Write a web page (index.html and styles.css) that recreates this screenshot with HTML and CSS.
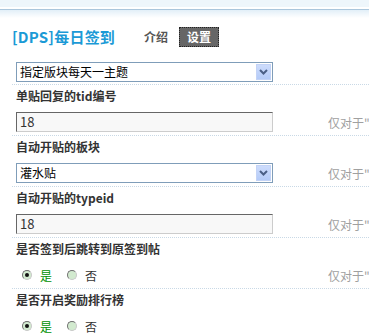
FILE: index.html
```html
<!DOCTYPE html>
<html>
<head>
<meta charset="utf-8">
<link rel="stylesheet" href="styles.css">
</head>
<body>
<div class="page">
  <div class="topbar"></div>
  <div class="topgap"></div>
  <div class="topline"></div>
  <div class="head">
    <h1 class="title">[DPS]每日签到</h1>
    <div class="tabs">
      <span class="tab">介绍</span>
      <span class="tab active">设置</span>
    </div>
  </div>
  <div class="form">
    <div class="row first">
      <div class="field">
        <div class="select"><span class="sel-text">指定版块每天一主题</span><span class="sel-btn"><svg width="9" height="6" viewBox="0 0 9 6"><path d="M1 1 L4.5 4.5 L8 1" fill="none" stroke="#4a5f86" stroke-width="2"/></svg></span></div>
      </div>
    </div>
    <div class="row">
      <div class="label">单贴回复的tid编号</div>
      <div class="field">
        <div class="input">18</div>
        <span class="tip">仅对于"每日签到"有效</span>
      </div>
    </div>
    <div class="row">
      <div class="label">自动开贴的板块</div>
      <div class="field">
        <div class="select"><span class="sel-text">灌水贴</span><span class="sel-btn"><svg width="9" height="6" viewBox="0 0 9 6"><path d="M1 1 L4.5 4.5 L8 1" fill="none" stroke="#4a5f86" stroke-width="2"/></svg></span></div>
        <span class="tip">仅对于"每日签到"有效</span>
      </div>
    </div>
    <div class="row">
      <div class="label">自动开贴的typeid</div>
      <div class="field">
        <div class="input">18</div>
        <span class="tip">仅对于"每日签到"有效</span>
      </div>
    </div>
    <div class="row">
      <div class="label">是否签到后跳转到原签到帖</div>
      <div class="field">
        <div class="radios">
          <span class="radio checked"></span><span class="opt yes">是</span>
          <span class="radio"></span><span class="opt">否</span>
        </div>
        <span class="tip">仅对于"每日签到"有效</span>
      </div>
    </div>
    <div class="row">
      <div class="label">是否开启奖励排行榜</div>
      <div class="field">
        <div class="radios">
          <span class="radio checked"></span><span class="opt yes">是</span>
          <span class="radio"></span><span class="opt">否</span>
        </div>
      </div>
    </div>
  </div>
</div>
</body>
</html>
```
FILE: styles.css
```css
html, body {
  margin: 0;
  padding: 0;
  background: #fff;
}
body {
  font-family: "Noto Sans CJK SC", "DejaVu Sans", sans-serif;
  font-size: 12px;
  color: #333;
  overflow: hidden;
}
.page {
  width: 369px;
  height: 336px;
  overflow: hidden;
}
.topbar {
  height: 7px;
  background: #eef6fb;
}
.topgap {
  height: 2px;
  background: #fff;
}
.topline {
  height: 8px;
  border-top: 1px solid #aac6dc;
  background: linear-gradient(#e2eff8, #fff);
}
.head {
  display: flex;
  align-items: center;
  height: 20px;
  margin-top: 9px;
  padding-left: 12px;
}
.title {
  margin: 0;
  font-size: 15px;
  font-weight: bold;
  line-height: 20px;
  color: #1b9ad6;
  letter-spacing: 0.2px;
}
.tabs {
  display: flex;
  align-items: center;
  margin-left: 29px;
  gap: 11px;
}
.tab {
  font-weight: bold;
  color: #555;
  line-height: 18px;
}
.tab.active {
  background: #666;
  color: #fff;
  border: 1px dotted #222;
  padding: 0 7px;
}
.form {
  margin-left: 12px;
  margin-top: 15px;
}
.row {
  border-bottom: 1px dotted #c9d9e6;
  padding-bottom: 3px;
}
.row.first {
  padding-bottom: 2px;
}
.label {
  height: 22px;
  line-height: 22px;
  padding-left: 4px;
  font-weight: bold;
  color: #333;
}
.field {
  display: flex;
  align-items: center;
  padding-left: 4px;
  margin-top: 5px;
  height: 20px;
  white-space: nowrap;
}
.row.first .field {
  margin-top: 0;
}
.select {
  flex: none;
  box-sizing: border-box;
  width: 257px;
  height: 20px;
  border: 1px solid #7f9db9;
  background: #fff;
  display: flex;
  align-items: center;
  color: #000;
}
.sel-text {
  flex: 1;
  padding-left: 3px;
  line-height: 18px;
}
.sel-btn {
  width: 15px;
  height: 16px;
  margin-right: 1px;
  background: linear-gradient(#cddcfc, #b4cbf8);
  border: 1px solid #c3d3f6;
  box-sizing: border-box;
  display: flex;
  align-items: center;
  justify-content: center;
}
.input {
  flex: none;
  box-sizing: border-box;
  width: 257px;
  height: 20px;
  border: 1px solid;
  border-color: #666 #ccc #ccc #666;
  background: #f8f8f8;
  padding-left: 3px;
  line-height: 18px;
  font-size: 13px;
  color: #333;
}
.tip {
  flex: none;
  margin-left: 55px;
  color: #a0a0a0;
}
.radios {
  flex: none;
  display: flex;
  align-items: center;
  width: 257px;
  padding-left: 6px;
  box-sizing: border-box;
}
.radio {
  flex: none;
  box-sizing: border-box;
  width: 10px;
  height: 10px;
  border-radius: 50%;
  border: 1px solid;
  border-color: #6f6f6f #c8c8c8 #c8c8c8 #6f6f6f;
  background: #d2eacf;
  display: flex;
  align-items: center;
  justify-content: center;
}
.radio.checked::after {
  content: "";
  width: 4px;
  height: 4px;
  border-radius: 50%;
  background: #111;
}
.opt {
  margin-left: 8px;
  margin-right: 15px;
  color: #333;
}
.opt.yes {
  color: #009000;
}
```
